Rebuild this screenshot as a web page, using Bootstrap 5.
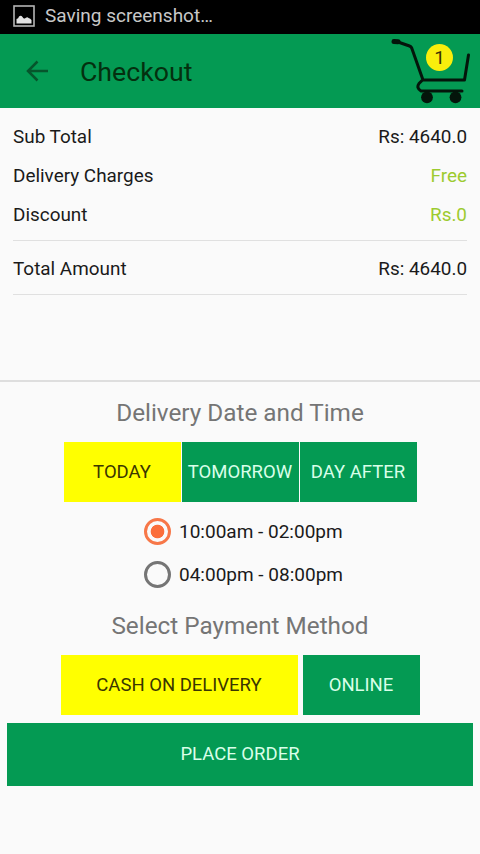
<!DOCTYPE html>
<html lang="en">
<head>
<meta charset="utf-8">
<meta name="viewport" content="width=device-width, initial-scale=1">
<title>Checkout</title>
<link href="https://cdn.jsdelivr.net/npm/bootstrap@5.3.0/dist/css/bootstrap.min.css" rel="stylesheet">
<style>
  body { font-family: Roboto, "Liberation Sans", sans-serif; font-size: 19px; line-height: 24px; color: #1a1a1a; background: #fafafa; height: 854px; overflow: hidden; }
  .status-strip { height: 34px; background: #000; color: #c8c8c8; padding: 0 13px 2px; font-size: 19px; }
  .status-strip span { margin-left: 10px; }
  .app-header { height: 74px; background: #049a53; color: #04300f; padding-left: 25px; padding-right: 10px; }
  .app-title { font-size: 26.7px; line-height: 32px; margin: 1px 0 0 31px; font-weight: 400; }
  .cart-link { width: 80px; height: 68px; }
  .cart-count { position: absolute; left: 36px; top: 7px; width: 27px; height: 27px; font-size: 19px; background: #f9ee0c; color: #3a3205; }
  .summary { height: 274px; padding: 9px 13px 0; border-bottom: 2px solid #dedede; }
  .summary-row { height: 39px; font-size: 18.9px; }
  .total-row { height: 55px; border-top: 1px solid #e0e0e0; border-bottom: 1px solid #e0e0e0; margin-top: 6px; padding-top: 2px; font-size: 18.9px; }
  .free { color: #9dcb2f; }
  .section-title { font-size: 24.3px; line-height: 30px; font-weight: 400; color: #757575; margin: 16px 0 0; }
  .slots + .section-title { margin-top: 15px; }
  .tile { height: 60px; width: 117px; padding: 2px 0 0; font-size: 18.5px; border: 0; border-radius: 0; background: #049a53; color: #d9ffe9; white-space: nowrap; }
  .tile.picked { background: #ff0; color: #3a3600; }
  .tile-wide { width: 237px; }
  .tile-block { width: 466px; height: 63px; padding-top: 0; }
  .days { gap: 1px; margin-top: 14px; }
  .slots { margin: 8px 0 0 7px; }
  .pay { gap: 5px; margin-top: 14px; }
  .slot { height: 43px; }
  .slot .form-check-input { width: 27px; height: 27px; margin: 0 8px 0 0; border: 3px solid #757575; background-color: transparent; box-shadow: none; }
  .slot .form-check-input:checked { border-color: #f77748; background-image: radial-gradient(circle, #fb6e3b 6.4px, transparent 7.2px); background-size: 100% 100%; }
</style>
<script src="https://cdn.jsdelivr.net/npm/bootstrap@5.3.0/dist/js/bootstrap.bundle.min.js"></script>
</head>
<body>
<div class="status-strip d-flex align-items-center">
  <svg width="22" height="22" viewBox="0 0 22 22"><rect x="1" y="1" width="20" height="20" fill="none" stroke="#b4b4b4" stroke-width="1.6"/><path d="M3.500 18.500v-4.500q2-.5 2.500-2.500q2-1.500 3.500.5q1.500 2.500 3 1q2-1.500 3 0q2 .5 3 2v3.500z" fill="#e2e2e2"/></svg>
  <span>Saving screenshot…</span>
</div>
<header class="app-header d-flex align-items-center">
  <svg width="24" height="22" viewBox="0 0 24 22" fill="none" stroke="#06552c" stroke-width="2.500"><path d="M3 11H23M12.500 1.500L3 11l9.500 9.500"/></svg>
  <h1 class="app-title">Checkout</h1>
  <div class="cart-link position-relative ms-auto">
    <svg width="80" height="68" viewBox="0 0 80 68" fill="none" stroke="#04150b" stroke-width="3" stroke-linecap="round" stroke-linejoin="round">
      <path d="M4 4.500l4 .3" stroke-width="5"/><path d="M8 5L19.500 9q1.500.5 2.200 2L33 43H74.500L78.500 18M32 43.500l-3 3q-3 4.500 2 7.500H72"/>
      <circle cx="37" cy="60.300" r="5.900" fill="#04150b" stroke="none"/><circle cx="65.500" cy="60.300" r="5.900" fill="#04150b" stroke="none"/>
    </svg>
    <span class="cart-count rounded-circle d-flex align-items-center justify-content-center">1</span>
  </div>
</header>
<main>
  <section class="summary">
    <div class="summary-row d-flex justify-content-between align-items-center"><span>Sub Total</span><span>Rs: 4640.0</span></div>
    <div class="summary-row d-flex justify-content-between align-items-center"><span>Delivery Charges</span><span class="free">Free</span></div>
    <div class="summary-row d-flex justify-content-between align-items-center"><span>Discount</span><span class="free">Rs.0</span></div>
    <div class="total-row d-flex justify-content-between align-items-center"><span>Total Amount</span><span>Rs: 4640.0</span></div>
  </section>
  <section class="d-flex flex-column align-items-center">
    <h2 class="section-title">Delivery Date and Time</h2>
    <div class="days d-flex">
      <button class="btn tile picked">TODAY</button>
      <button class="btn tile">TOMORROW</button>
      <button class="btn tile">DAY AFTER</button>
    </div>
    <div class="slots">
      <label class="slot d-flex align-items-center"><input class="form-check-input" type="radio" name="slot" checked>10:00am - 02:00pm</label>
      <label class="slot d-flex align-items-center"><input class="form-check-input" type="radio" name="slot">04:00pm - 08:00pm</label>
    </div>
    <h2 class="section-title">Select Payment Method</h2>
    <div class="pay d-flex">
      <button class="btn tile tile-wide picked">CASH ON DELIVERY</button>
      <button class="btn tile">ONLINE</button>
    </div>
    <button class="btn tile tile-block mt-2">PLACE ORDER</button>
  </section>
</main>
</body>
</html>
